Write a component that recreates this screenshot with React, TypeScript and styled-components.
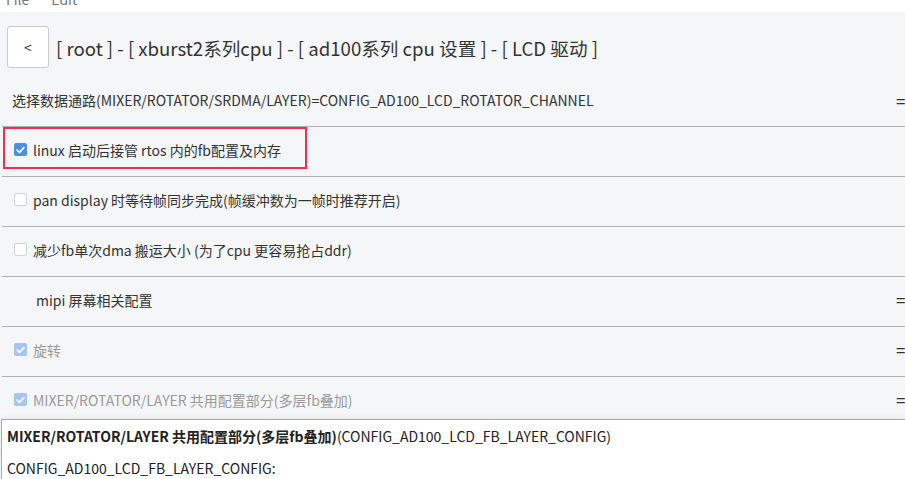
import React from 'react';
import styled, { createGlobalStyle } from 'styled-components';

const GlobalStyle = createGlobalStyle`
  html, body {
    margin: 0;
    padding: 0;
    overflow: hidden;
    background: #f5f6f8;
  }
  body {
    font-family: "Noto Sans CJK SC", "Noto Sans", sans-serif;
    color: #333;
  }
`;

const Page = styled.div`
  width: 905px;
  height: 479px;
  display: flex;
  flex-direction: column;
  overflow: hidden;
`;

const MenuBar = styled.div`
  height: 12px;
  background: #fff;
  display: flex;
  gap: 22px;
  padding-left: 6px;
  overflow: hidden;
`;

const MenuItem = styled.span`
  font-size: 14px;
  line-height: 14px;
  margin-top: -8px;
  color: #777;
`;

const Header = styled.div`
  display: flex;
  align-items: center;
  gap: 7px;
  padding: 14px 7px 10px;
`;

const BackButton = styled.button`
  width: 42px;
  height: 42px;
  background: #fff;
  border: 1px solid #ccc;
  border-radius: 3px;
  font-family: inherit;
  font-size: 14px;
  color: #333;
  padding: 0;
`;

const Crumbs = styled.div`
  font-size: 18.6px;
  color: #333;
  white-space: nowrap;
`;

const List = styled.div`
  flex: 1;
  overflow: hidden;
`;

const Row = styled.div<{ $indent?: number }>`
  position: relative;
  height: 49px;
  display: flex;
  align-items: center;
  padding: 0 0 4px ${p => p.$indent ?? 10}px;
  box-sizing: border-box;
  border-bottom: 1px solid #b1b1b1;
  margin-left: 2px;
  margin-right: -12px;
  & + & {
    height: 50px;
  }
`;

const Label = styled.span<{ $muted?: boolean }>`
  flex: 1;
  font-size: 14px;
  white-space: nowrap;
  color: ${p => (p.$muted ? '#9a9a9a' : '#333')};
`;

const Handle = styled.span`
  width: 21px;
  font-size: 17px;
  color: #333;
`;

const Box = styled.span<{ $checked?: boolean; $muted?: boolean }>`
  width: 13px;
  height: 13px;
  flex: none;
  box-sizing: border-box;
  border-radius: 2px;
  margin-right: 6px;
  display: flex;
  align-items: center;
  justify-content: center;
  background: ${p =>
    p.$checked ? (p.$muted ? '#a6c6ef' : '#4a8fe0') : '#fff'};
  border: ${p => (p.$checked ? 'none' : '1px solid #cfd3da')};
`;

const Highlight = styled.div`
  position: absolute;
  left: 1px;
  top: 0;
  width: 304px;
  height: 42px;
  box-sizing: border-box;
  border: 2px solid #ec2d55;
  pointer-events: none;
`;

const Panel = styled.div`
  height: 60px;
  flex: none;
  box-sizing: border-box;
  background: #fff;
  border-top: 1px solid #aaa;
  border-left: 1px solid #aaa;
  margin-left: 1px;
  padding: 8px 0 0 5px;
  box-shadow: 0 -3px 4px rgba(0, 0, 0, 0.04);
  font-size: 14px;
  color: #222;
  white-space: nowrap;
  position: relative;
  z-index: 1;
`;

const PanelLine = styled.div`
  line-height: 16px;
  margin-bottom: 16px;
`;

const Check = () => (
  <svg width="9" height="8" viewBox="0 0 9 8">
    <path d="M1.2 4.2 L3.5 6.3 L7.8 1.6" fill="none" stroke="#fff" strokeWidth="1.8" strokeLinecap="round" strokeLinejoin="round" />
  </svg>
);

type Item = {
  text: string;
  kind: 'text' | 'check';
  checked?: boolean;
  muted?: boolean;
  indent?: number;
  handle?: boolean;
  marked?: boolean;
};

const items: Item[] = [
  { text: '选择数据通路(MIXER/ROTATOR/SRDMA/LAYER)=CONFIG_AD100_LCD_ROTATOR_CHANNEL', kind: 'text', handle: true },
  { text: 'linux 启动后接管 rtos 内的fb配置及内存', kind: 'check', checked: true, marked: true },
  { text: 'pan display 时等待帧同步完成(帧缓冲数为一帧时推荐开启)', kind: 'check' },
  { text: '减少fb单次dma 搬运大小 (为了cpu 更容易抢占ddr)', kind: 'check' },
  { text: 'mipi 屏幕相关配置', kind: 'text', indent: 34, handle: true },
  { text: '旋转', kind: 'check', checked: true, muted: true, handle: true },
  { text: 'MIXER/ROTATOR/LAYER 共用配置部分(多层fb叠加)', kind: 'check', checked: true, muted: true, handle: true },
];

export default function App() {
  return (
    <Page>
      <GlobalStyle />
      <MenuBar>
        <MenuItem>File</MenuItem>
        <MenuItem>Edit</MenuItem>
      </MenuBar>
      <Header>
        <BackButton>&lt;</BackButton>
        <Crumbs>[ root ] - [ xburst2系列cpu ] - [ ad100系列 cpu 设置 ] - [ LCD 驱动 ]</Crumbs>
      </Header>
      <List>
        {items.map(it => (
          <Row key={it.text} $indent={it.kind === 'check' ? 12 : it.indent}>
            {it.kind === 'check' && (
              <Box $checked={it.checked} $muted={it.muted}>
                {it.checked && <Check />}
              </Box>
            )}
            <Label $muted={it.muted}>{it.text}</Label>
            {it.handle && <Handle>=</Handle>}
            {it.marked && <Highlight />}
          </Row>
        ))}
      </List>
      <Panel>
        <PanelLine>
          <b>MIXER/ROTATOR/LAYER 共用配置部分(多层fb叠加)</b>(CONFIG_AD100_LCD_FB_LAYER_CONFIG)
        </PanelLine>
        <PanelLine>CONFIG_AD100_LCD_FB_LAYER_CONFIG:</PanelLine>
      </Panel>
    </Page>
  );
}
